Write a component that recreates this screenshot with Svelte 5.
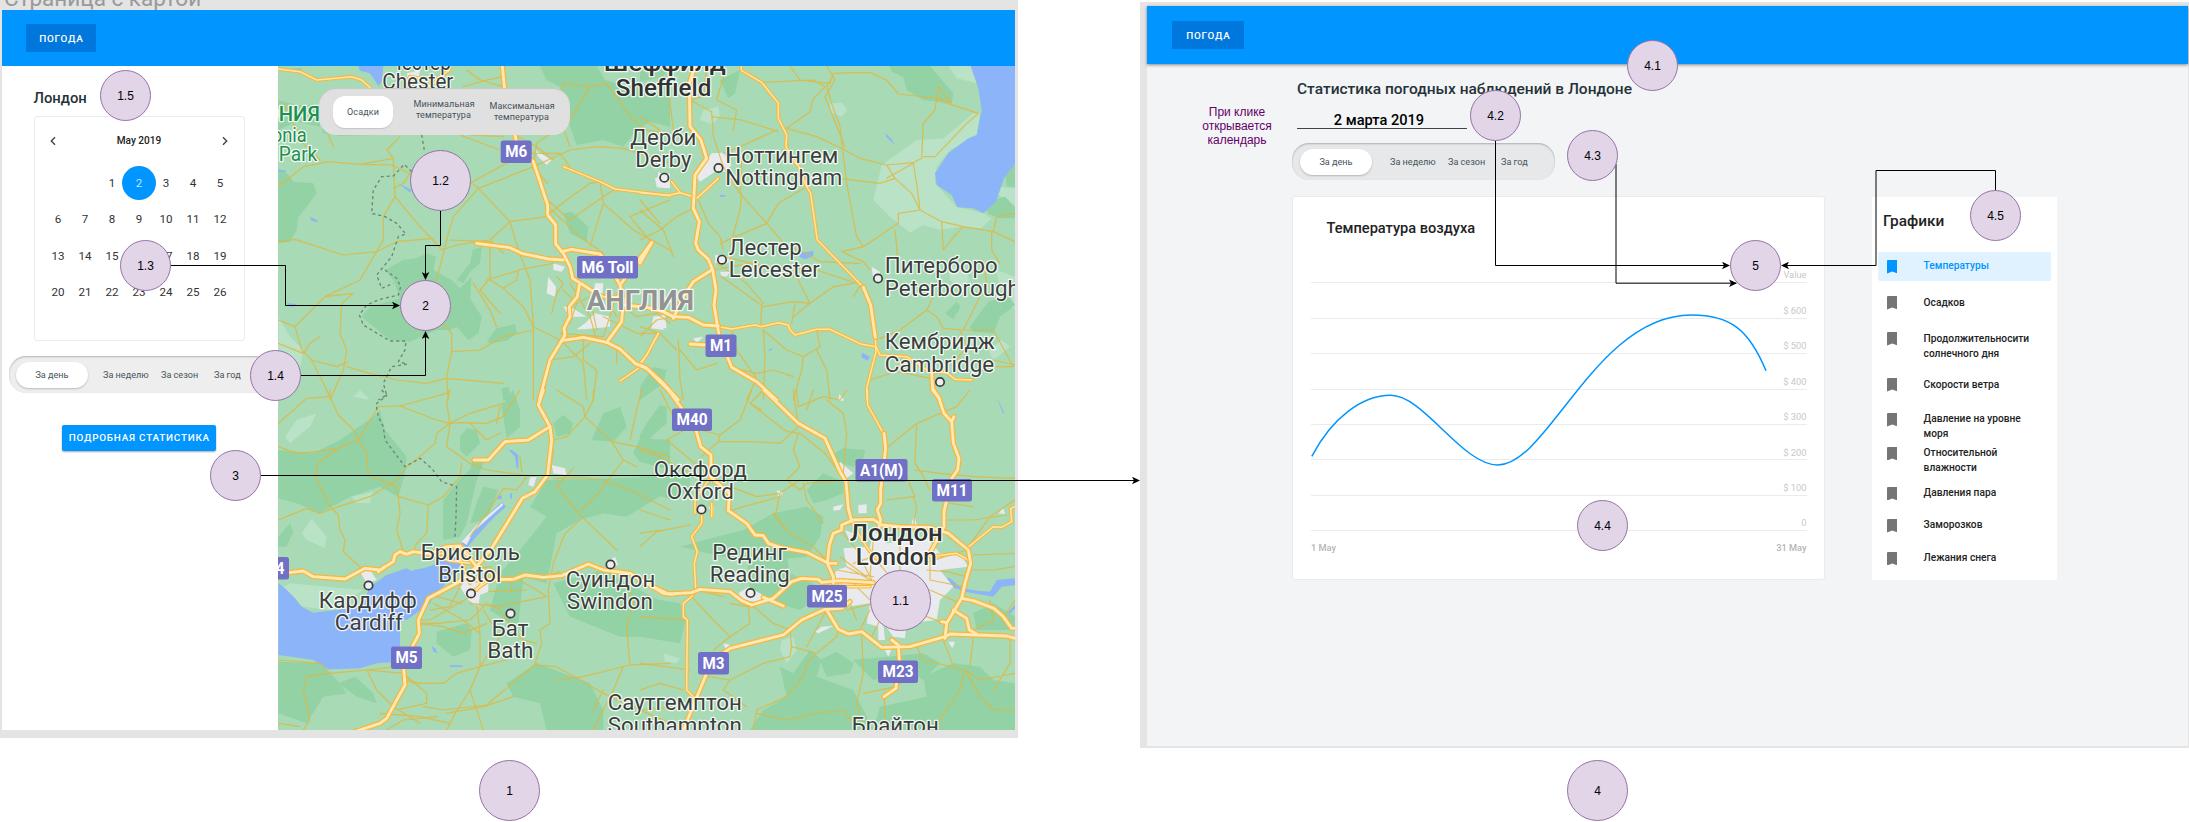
<script>
  const weeks = [
    ['', '', 1, 2, 3, 4, 5],
    [6, 7, 8, 9, 10, 11, 12],
    [13, 14, 15, 16, 17, 18, 19],
    [20, 21, 22, 23, 24, 25, 26]
  ];
  const periods = ['За день', 'За неделю', 'За сезон', 'За год'];
  const metrics = [
    { t: ['Температуры'], h: 36.2, on: true },
    { t: ['Осадков'], h: 36 },
    { t: ['Продолжительносити', 'солнечного дня'], h: 46 },
    { t: ['Скорости ветра'], h: 34.8 },
    { t: ['Давление на уровне', 'моря'], h: 33.8 },
    { t: ['Относительной', 'влажности'], h: 39.8 },
    { t: ['Давления пара'], h: 32.5 },
    { t: ['Заморозков'], h: 32.5 },
    { t: ['Лежания снега'], h: 28 }
  ];
  const axis = ['Value', '$ 600', '$ 500', '$ 400', '$ 300', '$ 200', '$ 100', '0'];

  // Map tiles: every tile holds its own drawing units, three to a pixel.
  const tiles = [
    {
      x: 270, y: 50,
      forest: [
        'M25,355 50,370 70,395 130,400 140,430 110,470 85,500 80,540 60,575 25,580Z',
        'M345,660 400,630 440,625 470,610 498,620 490,660 545,690 570,715 605,680 600,745 635,800 625,850 595,870 560,830 540,840 500,840 420,875 360,870 275,800 300,770 390,745 370,690Z',
        'M608,600 635,590 630,640 600,665 580,700 560,690 600,640Z',
        'M650,875 680,835 735,822 740,850 710,872 660,880Z',
        'M810,48 980,48 1005,90 1080,110 1200,140 1200,230 1140,215 1100,240 1060,290 1000,270 920,285 890,200 870,110 830,90Z',
        'M880,490 905,485 955,530 950,575 900,550Z',
        'M150,215 190,200 310,255 210,258 160,250Z',
        'M695,1015 715,1010 728,1050 700,1050Z',
        'M25,150 80,165 130,165 150,185 150,230 80,215 25,240Z'
      ],
      light: ['M25,800 60,860 100,900 85,990 60,940 25,900Z', 'M900,48 960,48 950,100 925,90Z'],
      water: ['M265,48 340,48 335,95 325,108 300,70 270,62Z', 'M120,500 140,510 144,517 125,512Z', 'M50,760 80,762 70,770 55,768Z', 'M25,361 47,361 47,366 25,366Z', 'M385,400 425,420 420,427 400,412Z', 'M25,58 100,55 75,66 25,62Z'],
      town: ['M410,70 450,60 445,90 415,90Z', 'M945,820 975,790 1020,800 1020,830 945,838 920,838Z', 'M835,680 858,710 855,740 830,730Z', 'M1150,800 1185,795 1190,835 1145,835Z', 'M975,700 1000,700 995,770 965,770Z', 'M850,640 885,650 875,665 850,660Z', 'M795,300 845,330 830,345 805,320Z', 'M1155,385 1200,370 1200,415 1160,410Z', 'M880,770 900,770 950,800 900,800Z'],
      minor: [
        'M25,410 100,350 175,335 270,343 365,345 420,370 M150,330 100,280 40,160 M270,343 370,325 350,300 390,260 M370,325 375,440 340,500 340,570 270,690 165,740 75,830 M175,255 190,290',
        'M25,575 75,568 220,615 320,605 380,575 490,565 M375,440 450,530 500,582 515,600 560,585 655,570 M420,370 400,400 372,415 M605,400 625,415 550,500 535,550 500,690 M540,570 660,575 660,690',
        'M625,415 720,515 745,600 780,690 790,820 790,1050 M720,515 830,500 M720,515 660,570 700,610 M600,400 690,350 750,320 M625,415 790,350 833,400 M510,810 545,850 545,905 530,980 535,1050 M545,905 630,900 700,860 790,840',
        'M75,830 95,900 125,930 180,1040 M125,930 200,950 235,935 M165,740 250,730 215,760 210,850 230,900 220,960 180,1050 M75,830 25,810 M25,880 100,910 120,880 150,860 M230,950 300,970 380,990 470,1000 530,985 700,1000',
        'M660,690 700,715 760,770 790,830 870,870 M700,715 740,690 745,660 850,640 M650,690 750,660 M790,350 900,300 980,290 1060,295 M790,350 800,280 900,210 960,110 1010,100 1080,200 1130,240 M900,290 860,180 880,100 960,110',
        'M785,310 870,310 900,350 M833,495 890,450 960,400 990,395 1000,460 1090,540 1200,600 M845,480 930,560 1000,610 M833,450 900,510 1000,440 1035,417 M1000,460 960,590 M1145,578 1080,500 1200,450',
        'M870,850 1000,860 1050,705 M900,700 960,800 980,870 M880,720 920,760 960,740 1010,750 1040,800 M860,680 880,700 860,730 845,790 M920,760 900,820 M960,740 980,840 M1000,730 1100,800 1160,790 1200,820 M1000,800 1100,850 1165,850',
        'M875,872 940,940 950,1050 M940,870 940,930 980,960 970,1050 M1040,900 1040,940 M840,930 910,920 960,880 M610,700 660,780 680,830 M655,690 630,720 690,790 M700,110 630,90 590,60 M580,110 650,90 700,80',
        'M570,255 690,300 M700,260 600,255 M735,255 800,290 850,330 M1090,110 1200,105 M1130,240 1200,250 M1060,295 1200,340'
      ],
      medium: ['M25,57 90,65 140,90 245,80 275,90 300,113', 'M880,350 990,395 1035,417 1200,437', 'M1165,850 1130,915 1110,940 1105,955 1050,993', 'M405,110 420,80 450,85 480,110 510,80 540,60', 'M940,705 1000,740 1060,740'],
      major: ['M697,48 703,110 735,255 745,300 790,335 833,465 833,495 857,525 857,582 880,610 900,650 908,685 940,705 970,725', 'M875,605 905,598 990,612 1020,650 1050,705', 'M620,580 720,593 755,610 835,627 880,630', 'M928,705 922,740 898,770 900,800 882,835 885,855 875,872 840,930 808,1050', 'M875,872 940,862 1010,877 1050,897 1095,940 1130,955 1200,1025', 'M1010,877 1055,815 1060,750 1050,705 1145,578', 'M1060,765 1130,772 1180,785 1210,800']
    },
    {
      x: 640, y: 50,
      forest: ['M0,48 90,48 70,80 0,95Z', 'M750,48 870,48 940,130 935,160 850,150 800,120 790,80 755,65Z', 'M1035,470 1060,450 1095,440 1125,470 1125,505 1080,505 1045,492Z', 'M1095,360 1125,345 1125,410 1100,410Z', 'M990,830 1045,755 1105,735 1125,765 1080,800 1060,850 1000,845Z', 'M915,790 950,755 962,770 940,808Z', 'M240,90 300,60 285,130 265,145Z', 'M0,180 20,200 10,225 0,225Z', 'M0,1010 40,950 80,960 70,1000 0,1050Z'],
      light: ['M725,345 830,270 910,265 1000,190 1020,190 1010,255 930,300 890,350 885,400 950,470 1030,490 1055,505 1025,535 960,530 900,540 850,525 810,548 750,500 700,450Z', 'M570,160 605,158 622,180 605,200 570,185Z', 'M190,180 235,170 240,200 215,222 180,210Z', 'M925,48 1000,48 1010,100 950,85Z', 'M925,640 975,660 990,690 960,715 930,690Z', 'M1045,900 1085,870 1110,890 1060,930Z', 'M1080,410 1125,415 1125,475 1070,430Z', 'M1070,660 1125,680 1125,780 1080,720Z'],
      water: ['M992,48 1125,48 1125,342 1092,385 1068,455 1030,490 1000,475 952,472 935,435 890,405 885,370 925,310 985,265 1010,255 1025,180 1015,115Z', 'M480,608 520,603 520,618 495,628 478,620Z', 'M665,908 690,920 682,932 665,922Z', 'M735,248 755,268 765,285 740,262Z', 'M240,435 256,435 256,440 240,440Z', 'M383,900 400,893 392,902Z', 'M930,965 935,965 925,990Z'],
      town: ['M55,365 90,385 85,415 50,412Z', 'M215,310 250,308 275,345 255,365 225,365 180,395 165,375 195,340Z', 'M225,615 270,620 265,640 225,640Z', 'M240,665 270,665 260,680 245,678Z', 'M40,800 75,800 70,840 35,835Z', 'M695,650 720,665 720,690 700,690Z', 'M160,865 190,860 170,880Z', 'M598,1032 612,1050 595,1050Z'],
      minor: [
        'M450,48 480,90 520,95 570,100 580,70 640,68 690,68 740,90 775,132 830,138 900,145 935,158 895,110 M580,75 560,110 575,160 600,230 620,400 650,560 670,590 M365,97 520,90 555,110 520,145 510,185 440,235 M560,48 585,90 555,140 615,290',
        'M440,235 530,260 615,300 660,325 740,345 820,338 845,325 850,220 885,180 895,110 M850,320 885,320 935,268 975,225 1015,190 970,175 890,150 M740,345 765,385 815,430 840,480 775,490 775,520 670,590 605,605 670,635 690,660 M740,385 820,340 830,400 840,480 905,515 970,530 1060,545 1125,575',
        'M905,515 910,600 950,550 970,530 M1060,545 1070,500 1125,490 M1055,545 1055,600 1080,640 M765,540 775,640 M720,400 765,385 M600,385 720,400 M150,150 215,185 220,260 250,350 300,430 380,520 440,590 480,600 540,635 660,640 M215,200 305,210 415,245 M410,240 300,290 250,310',
        'M175,450 205,520 240,560 250,600 M160,475 110,500 60,540 0,570 M300,430 305,330 M270,590 300,480 305,430 M240,580 380,520 415,460 500,410 M230,640 320,700 370,760 M220,660 330,640 470,680 500,740 510,760 460,800 M245,680 370,770 460,755 510,760 580,710 640,700 M250,620 380,650 530,660 650,700',
        'M362,830 365,770 M455,820 465,760 M665,700 640,740 M530,840 540,890 490,920 440,900 370,840 375,920 370,1050 M530,900 560,960 570,1050 M490,920 485,960 460,1050 M265,950 350,970 400,960 460,980 M0,450 60,520 M275,845 290,900 350,985 320,1050',
        'M720,865 780,840 860,780 890,800 910,835 970,840 1060,840 M860,780 880,740 M970,840 990,800 1040,700 1030,630 M1060,840 1120,950 1060,950 M800,920 750,970 690,990 M750,960 870,985 M940,940 980,890 960,840 M1000,985 1060,930 1125,945 M120,900 170,960 230,940 M115,870 120,990 130,1050 M0,200 60,240 M80,80 100,240',
        'M250,80 230,150 290,180 280,240 M200,50 190,140 150,150 M0,480 70,540 100,620 M0,830 60,850 110,900 M0,860 50,810 100,800'
      ],
      medium: ['M303,48 305,62 365,97 415,160 415,205 440,255 438,290 460,330 480,355 495,400 512,430 532,570 670,712', 'M0,428 85,436 120,428 160,440', 'M95,395 120,428', 'M170,445 235,385', 'M237,830 275,837 345,825 365,830 415,818 445,825 450,840 465,855 530,838 570,838 665,883 708,890 720,915 800,920 860,960', 'M706,862 708,905 680,1015 682,1050', 'M870,965 920,968 945,988 995,990', 'M55,850 20,915 0,945'],
      major: ['M165,48 148,100 150,230 182,268 200,325 165,375 160,475 178,515 167,580 175,600 205,628 218,660 228,720 222,765 237,855 262,920 275,952 350,995 410,1050', 'M0,640 35,578', 'M215,660 160,695 130,740 100,805', 'M60,780 100,800 145,802 190,825 235,828', 'M150,882 200,885', 'M670,712 692,765 706,862', 'M875,970 878,1015 900,1050', 'M0,945 20,955 70,1000 115,1050']
    },
    {
      x: 270, y: 390,
      forest: ['M25,180 130,190 210,150 310,80 330,60 345,120 410,200 405,250 385,320 330,290 240,320 150,370 80,340 25,325Z', 'M520,330 575,260 600,240 610,200 640,220 620,270 590,400 570,440 520,450Z', 'M570,140 590,115 620,120 630,160 590,200 570,180Z', 'M750,480 830,380 780,350 830,270 1200,260 1200,300 1070,380 1000,370 930,390 860,430 830,580 760,560 745,700 720,700 660,660 690,550Z', 'M850,580 1000,540 1200,650 1200,740 1050,740 950,700 900,680Z', 'M25,815 150,820 200,870 230,910 160,920 110,1000 25,970Z', 'M205,880 255,860 310,910 320,940 260,920Z', 'M710,880 800,820 960,880 1000,960 1000,1020 830,1020 810,940 730,920Z', 'M1090,190 1110,145 1200,150 1200,240 1110,215Z', 'M965,150 1000,70 1050,50 1070,110 1030,155Z', 'M850,100 880,75 910,100 900,130 860,140Z', 'M695,48 730,0 750,60 750,110 710,145Z', 'M500,725 590,700 605,720 600,780 550,800 500,760Z', 'M25,440 60,400 70,425 50,470 25,470Z', 'M640,290 685,300 650,390 600,400 620,340Z'],
      light: ['M45,140 80,90 140,70 120,110 60,160Z', 'M95,430 125,385 170,440 165,475 110,450Z', 'M245,320 310,305 300,340 260,340Z', 'M270,0 300,30 250,20Z', 'M25,600 60,580 280,600 180,660 100,650Z'],
      water: ['M25,580 45,595 75,625 95,650 130,668 280,650 400,570 430,540 490,530 500,510 560,500 575,520 520,590 470,630 440,660 390,700 390,815 320,820 270,835 175,838 130,810 65,800 25,795Z', 'M300,590 350,555 410,535 430,545 490,525 540,510 480,640 410,690 270,660Z', 'M575,460 600,425 650,380 695,335 708,350 680,375 655,400 615,445 590,475Z', 'M485,768 495,775 503,790 490,785Z', 'M540,826 577,826 577,831 540,831Z', 'M700,175 715,178 735,200 740,235 745,235 745,195 725,180Z', 'M683,318 695,316 695,328 683,328Z', 'M720,310 726,310 726,325 720,325Z'],
      town: ['M570,590 600,560 655,570 655,605 630,615 625,650 595,630Z', 'M270,545 300,540 320,570 290,580Z', 'M845,225 885,235 890,255 850,250Z', 'M780,262 800,262 790,290 775,285Z', 'M1010,515 1035,500 1045,525 1020,530Z', 'M575,455 620,405 690,345 695,338 700,345 610,425 590,465Z'],
      minor: [
        'M25,100 110,25 180,20 180,0 M180,20 205,75 255,125 265,150 290,190 295,255 380,290 385,320 475,345 520,320 570,260 575,220 M25,170 80,190 140,185 205,175 265,150 325,50 390,48 500,90 540,100 580,98 650,100 700,80 750,0',
        'M205,175 145,220 135,255 180,350 205,375 210,420 225,450 220,485 280,540 M25,390 110,355 150,370 205,350 300,320 380,270 410,230 450,200 495,160 500,130 540,100 530,170 600,220 650,240 780,258 M390,48 530,10 540,0 M540,100 530,40 540,0 M385,320 390,370 380,420 400,485 M475,345 470,430 440,460 430,485',
        'M540,100 600,70 700,40 M600,100 650,150 690,130 M680,100 690,50 M850,150 890,140 945,80 970,30 970,0 M945,80 1025,155 1100,170 1200,200 M1025,155 1060,210 1100,230 M945,80 940,50 860,0 M1080,150 1100,60 1115,0 M850,265 930,262 1000,270 1080,300 1200,360 M860,290 935,380 1040,480 M860,290 910,235 M935,360 985,310 1060,210',
        'M850,180 840,250 M770,260 740,300 700,295 650,370 600,440 M750,200 755,245 M930,390 885,430 850,520 835,600 840,700 810,720 815,760 795,820 M800,825 860,830 1000,910 1200,1000 M800,820 740,870 650,945 520,960 460,950 M730,560 800,600 830,620 680,650 600,640',
        'M620,640 630,730 630,830 560,850 520,880 450,880 400,870 M630,830 710,810 M650,640 690,660 730,720 760,750 800,760 M630,730 580,690 490,640 M600,620 480,690 450,690 M655,605 770,600 M650,640 600,690 500,700 440,700 M640,660 690,740 630,830 M445,700 520,710 580,730 650,700',
        'M25,810 150,820 180,850 290,840 380,830 M180,850 110,860 100,900 120,990 M290,840 320,900 370,950 450,1000 M290,840 400,850 470,910 470,940 380,960 M400,850 430,880 M330,970 450,980 540,1000 M630,830 600,900 550,980 530,1020 M600,900 640,1020 M730,920 640,950 530,970 M1000,900 970,960 M860,870 940,860 1080,825 1200,820 M1080,825 1070,710 1090,640 1070,560',
        'M25,1000 90,1010 M120,990 100,1020 M350,1020 400,990 500,980 M830,560 870,545 M575,580 540,650 480,660 M575,640 500,620 M970,1020 1030,900 1060,830 M535,550 660,530 700,568 M730,568 720,600'
      ],
      medium: ['M530,490 480,492 530,470 570,468 600,500', 'M480,492 540,512 600,520', 'M560,470 575,520 600,580', 'M660,570 600,610', 'M620,530 700,568', 'M650,560 620,600'],
      major: ['M820,0 805,45 840,110 845,150 833,255 795,305 757,325 665,475 620,530 560,580 475,625 445,690 448,730 400,820 405,885 350,985 330,1000 255,1025', 'M612,210 655,210 705,155 775,150 840,110', 'M55,548 100,543 130,560 225,567 285,535 330,540 370,515 375,495 390,485 410,493 430,485 480,492 530,470 570,468 620,530', 'M620,570 730,568 765,555 820,562 875,557 955,522 1000,540 1080,550 1180,610 1210,613', 'M325,545 345,530']
    },
    {
      x: 640, y: 390,
      forest: ['M0,135 20,100 60,45 80,50 80,100 45,130 0,180Z', 'M0,260 150,255 150,290 100,330 0,300Z', 'M585,190 610,175 675,180 670,205 640,230 590,215Z', 'M500,300 550,250 610,275 610,310 560,330 520,340Z', 'M120,470 230,440 310,420 400,370 500,350 550,380 540,440 500,500 400,510 250,500Z', 'M320,490 440,500 450,550 560,600 480,660 380,630 330,600Z', 'M0,620 120,640 140,680 120,760 0,740Z', 'M330,1020 370,960 440,920 420,830 460,850 510,780 545,810 530,860 640,900 700,1020Z', 'M850,860 940,820 1020,830 1060,870 1125,880 1125,1020 700,1020 720,950 860,920Z', 'M540,810 590,785 640,820 630,850 560,860Z', 'M1000,670 1060,640 1125,680 1125,720 1010,720Z', 'M640,810 850,790 900,820 850,870 800,840 700,870Z'],
      light: ['M425,750 460,740 470,780 440,820 420,780Z', 'M70,790 120,805 110,820 75,815Z'],
      water: ['M900,565 930,565 965,595 1010,602 1050,605 1070,570 1125,565 1125,585 1085,590 1060,620 975,605 935,590 900,580Z', 'M1105,665 1125,645 1125,655 1110,672Z', 'M1070,20 1093,70 1088,68Z'],
      town: ['M610,475 690,470 700,420 740,460 860,440 900,490 960,490 985,530 900,540 940,590 900,630 890,690 800,700 795,745 760,740 730,700 735,750 715,750 715,710 680,700 690,640 620,650 600,630 570,580 590,540 620,530Z', 'M655,345 680,343 680,370 655,370Z', 'M580,350 610,343 600,360 580,362Z', 'M600,215 640,250 620,265 590,240Z', 'M295,610 325,590 385,625 370,640 310,630Z', 'M525,725 545,710 580,708 535,730Z', 'M735,780 755,778 745,800Z', 'M815,395 825,380 830,405 815,405Z', 'M925,755 945,755 937,775Z', 'M205,350 222,350 220,380Z', 'M1075,370 1090,355 1095,372Z', 'M410,300 430,308 415,322Z', 'M598,15 612,32 600,32Z', 'M615,420 640,430 630,455Z', 'M250,760 270,765 260,785Z'],
      minor: [
        'M0,180 60,200 150,250 M100,80 60,0 M150,110 80,150 200,250 M180,120 240,135 235,155 185,200 M235,155 340,155 420,160 475,110 460,0 M240,135 300,90 335,0 M330,40 440,125 480,130 555,190 600,250 M475,130 460,180 480,230 440,270 480,300 500,280 620,270 M420,310 350,320 270,290 M420,310 480,270 M420,310 405,380 450,430 520,470 560,510',
        'M0,470 50,425 150,405 M265,365 310,350 420,320 M400,370 440,420 M365,60 330,40 370,0 M475,50 550,20 600,30 620,0 M560,30 610,70 620,130 610,250 M475,50 470,0 M745,170 830,100 950,50 990,0 M830,100 825,220 845,250 870,300 M740,330 820,320 830,350 820,410 M825,240 900,250 1000,260 1125,265 M740,240 800,260 825,320',
        'M920,390 1000,390 1100,375 M985,470 1050,380 1125,330 M1000,350 930,340 M1000,495 1125,490 M590,540 700,560 M600,500 680,560 M620,530 710,580 M640,580 700,640 M870,490 870,570 M850,520 980,480 M870,600 960,640 M870,570 970,590 M860,680 915,700 M700,640 620,660 M690,660 660,720 M720,690 690,750',
        'M640,520 700,500 720,520 M860,540 920,545 980,560 M780,470 780,540 M700,450 690,560 M270,640 325,650 330,700 270,740 220,780 M170,600 250,620 M155,620 220,690 270,740 M330,640 400,700 450,720 455,770 450,800 370,820 270,870 205,860 M0,820 150,840 M140,690 0,680 M270,870 250,900 320,950',
        'M455,770 530,790 590,740 595,718 M530,790 500,820 490,860 440,920 350,960 340,1020 M350,970 440,990 530,970 610,960 640,1000 M665,725 670,850 650,940 670,1020 M733,920 735,1020 M670,910 770,890 830,840 M830,770 850,810 975,840 1020,870 M975,840 960,900 885,1010 M975,840 1020,920 1060,960 1125,960 M910,750 940,830 M1000,740 990,830 M1125,850 1020,870 M1110,740 1110,820 1060,900',
        'M1050,630 1060,690 1000,720 M1085,690 1125,630 M980,540 1060,540 1125,530 M560,660 500,770 M0,360 90,390 M0,430 60,420 M630,640 650,690 M610,430 650,480 700,580 M520,0 500,60 M750,560 700,500 M490,280 500,330 550,400 M0,900 60,880 130,900 M0,960 110,950'
      ],
      medium: ['M682,0 683,45 730,130', 'M185,360 185,400 155,440 172,485 163,520 167,595 155,620 130,640 130,680 142,690 140,900 160,920', 'M210,265 185,300 165,330 165,370', 'M980,475 1060,410 1085,412 1115,395 1112,355 1125,350', 'M870,500 950,490 985,510', 'M635,395 660,440 700,500 720,510', 'M215,340 215,380', 'M600,600 600,572', 'M545,575 610,590 690,590'],
      major: ['M85,0 165,110 182,170 213,195 213,262 268,310 265,362 320,400 345,435 370,437 385,460 420,472 500,487 565,520', 'M372,0 475,100 555,145 600,245 618,275 625,355 635,395', 'M732,130 737,175 722,300 722,340 712,360 722,390 715,420', 'M878,0 895,20 912,70 935,95 940,160 957,205 953,240 935,265 912,365 912,410 870,490', 'M635,390 700,388 725,405 780,410 870,412 925,430 985,480 992,520 975,580 965,625 920,700 915,745', 'M915,740 810,770 725,772 665,725 625,732 595,718 560,660', 'M635,392 605,405 605,420 580,430 568,465 562,520 580,560 580,580', 'M565,520 588,520', 'M40,590 85,612 155,608 180,598 270,605 305,632 335,645 400,625 455,575 485,565 535,568 545,577 600,572 700,578', 'M370,622 430,648', 'M130,1020 200,850 220,810 270,775 430,735 485,690 555,658 605,655 630,635', 'M965,625 1000,632 1062,655 1090,680 1115,715 1125,715', 'M940,660 980,685 988,720 1010,732', 'M905,695 920,698', 'M915,740 930,732 1100,738 1125,745', 'M755,750 775,765 778,810 768,895 732,920', 'M935,95 942,80']
    }
  ];

  // Place names: [text, left, baseline, width, kind]
  const names = [
    ['Честер', 390, 70, 61, ''], ['Chester', 383.5, 89, 70, ''],
    ['Шеффилд', 605, 70.7, 121, 'b'], ['Sheffield', 617, 95.5, 94.5, 'b'],
    ['ОНИЯ', 266, 120.7, 54, 'g gb'], ['onia', 273, 141.7, 34, 'g'], ['Park', 280, 160.7, 37.5, 'g'],
    ['АНГЛИЯ', 588, 310, 106, 'c'],
    ['Дерби', 631.5, 145, 65, ''], ['Derby', 636.5, 166.7, 55, ''],
    ['Ноттингем', 726.5, 163, 112, ''], ['Nottingham', 726.5, 185, 116, ''],
    ['Лестер', 730, 254.5, 72, ''], ['Leicester', 730, 277, 90, ''],
    ['Питерборо', 886, 273, 112, ''], ['Peterborough', 886, 295.5, 134, ''],
    ['Кембридж', 886, 349, 109, ''], ['Cambridge', 886, 371.5, 108.5, ''],
    ['Оксфорд', 655, 477, 92, ''], ['Oxford', 668, 499, 66, ''],
    ['Лондон', 851, 541, 92, 'b'], ['London', 857, 565, 80, 'b'],
    ['Рединг', 713.5, 560, 73.5, ''], ['Reading', 711, 582, 79, ''],
    ['Саутгемптон', 609, 710, 133, ''], ['Southampton', 609, 733, 133, ''], ['Брайтон', 853, 733, 86, ''],
    ['Бристоль', 422, 560, 98, ''], ['Bristol', 439.5, 582, 62, ''],
    ['Кардифф', 320, 607.5, 97, ''], ['Cardiff', 336, 630, 67, ''],
    ['Суиндон', 567, 587, 88.5, ''], ['Swindon', 568, 608.5, 85, ''],
    ['Бат', 493, 636, 35.5, ''], ['Bath', 488.5, 658, 45, '']
  ];
  const dots = [[664.3, 177.7], [718.5, 168], [722, 259.7], [878, 278.5], [940, 382], [701.5, 509.5], [750.5, 593], [471, 593.5], [368.5, 585.5], [610.5, 564.5], [510.5, 613.5]];
  const shields = [['M6', 500.7, 140.5, 31], ['M6 Toll', 577, 256, 61], ['M1', 705.5, 334.5, 31], ['M40', 672, 408.5, 40], ['A1(M)', 855.5, 459, 52], ['M11', 932, 479, 40], ['M25', 807, 585, 40], ['M3', 698, 652, 31], ['M23', 878, 660.5, 40], ['M5', 391, 646.5, 31], ['M4', 258, 557, 31]];

  const marks = [
    ['1.5', 125.5, 95.5, 25], ['1.2', 440.5, 180.5, 30], ['2', 425.5, 305.5, 25], ['1.3', 145.5, 265.5, 25], ['1.4', 275.5, 375.5, 25],
    ['3', 235.5, 475.5, 25], ['1', 509.5, 790.5, 30], ['1.1', 900.5, 600.5, 30], ['4.1', 1652.5, 65.5, 25], ['4.2', 1495.5, 115.5, 25],
    ['4.3', 1592.5, 155.5, 25], ['4.4', 1602.5, 525.5, 25], ['5', 1755.5, 265.5, 25], ['4.5', 1995.5, 215.5, 25], ['4', 1597.5, 790.5, 30]
  ];
  const links = [
    'M440.5 210.5V245.5H425.5V279', 'M170.5 265.5H285.5V305.5H399', 'M300.5 375.5H425.5V332', 'M260.5 475.5H700.5V480.5H1139',
    'M1495.5 140.5V265.5H1729', 'M1616 164V283.2H1736', 'M1995.5 190.5V170.5H1876V265.5H1782'
  ];
</script>

{#snippet tabs()}
  <div class="tabs">
    {#each periods as p, i}<span class="p{i}">{p}</span>{/each}
  </div>
{/snippet}

<main>
  <section class="frame left">
    <div class="caption">Страница с картой</div>
    <header><button>ПОГОДА</button></header>
    <div class="body">
      <aside>
        <h2>Лондон</h2>
        <div class="calendar">
          <div class="month">
            <svg width="8" height="10" viewBox="0 0 8 10"><path d="M6 1.2 2.3 5 6 8.8" /></svg>
            <b>May 2019</b>
            <svg width="8" height="10" viewBox="0 0 8 10"><path d="M2 1.2 5.7 5 2 8.8" /></svg>
          </div>
          <div class="days">
            {#each weeks.flat() as d}<span class:sel={d === 2}>{d}</span>{/each}
          </div>
        </div>
        {@render tabs()}
        <button class="more">ПОДРОБНАЯ СТАТИСТИКА</button>
      </aside>
      <div class="mapbox">
        <svg class="map" width="737" height="664" viewBox="278 66 737 664">
          <rect x="278" y="66" width="737" height="664" fill="#a7dab5" />
          {#each ['light', 'forest', 'water', 'town', 'minor', 'medium', 'major'] as layer}
            {#each tiles as t}
              <g transform="translate({t.x} {t.y}) scale(.33333)" class={layer}>
                {#each t[layer] as d}<path {d} />{/each}
              </g>
            {/each}
            {#if layer === 'medium' || layer === 'major'}
              {#each tiles as t}
                <g transform="translate({t.x} {t.y}) scale(.33333)" class="{layer} core">
                  {#each t[layer] as d}<path {d} />{/each}
                </g>
              {/each}
            {/if}
          {/each}
          <g transform="translate(270 50) scale(.33333)" class="border">
            <path d="M455,255 463,300 M425,365 403,343 370,378 335,380 310,420 305,490 345,500 380,520 408,552 385,560 365,620 320,675 335,715 370,700 M345,660 380,685 392,710 385,735 330,748 290,765 268,795 280,825 360,873 408,873 405,900 385,935 412,942 365,950 340,1000 350,1035 325,1050" />
          </g>
          <g transform="translate(270 390) scale(.33333)" class="border">
            <path d="M335,0 350,17 318,42 325,80 340,110 345,150 405,230 450,205 485,235 515,275 560,290 558,380 555,440" />
          </g>
          {#each dots as [x, y]}<circle cx={x} cy={y} r="4.2" fill="#eee" stroke="#3c3c3c" stroke-width="1.7" />{/each}
          {#each names as [s, x, y, w, k]}
            <text class="name {k}" x={x - 1.2} {y} textLength={w + 1} lengthAdjust="spacingAndGlyphs">{s}</text>
          {/each}
          {#each shields as [s, x, y, w]}
            <rect {x} {y} width={w} height="22.4" rx="2.5" fill="#7070c6" />
            <text class="shield" x={x + w / 2} y={y + 16.7} textLength={w - 9} lengthAdjust="spacingAndGlyphs">{s}</text>
          {/each}
        </svg>
        <div class="layers">
          <span class="on">Осадки</span>
          <span class="min">Минимальная<br />температура</span>
          <span class="max">Максимальная<br />температура</span>
        </div>
      </div>
    </div>
  </section>

  <section class="frame right">
    <header><button>ПОГОДА</button></header>
    <div class="stats">
      <div class="main">
        <h2>Статистика погодных наблюдений в Лондоне</h2>
        <div class="date">2 марта 2019</div>
        {@render tabs()}
        <div class="card">
          <h3>Температура воздуха</h3>
          <div class="plot">
            {#each axis as a}<div class="tick">{a}</div>{/each}
            <svg width="497" height="270" viewBox="1310 266 497 270"><path d="M1311.8 456.3C1332 418 1362 395.3 1390.7 395.3C1424 395.3 1462 465 1497.9 465C1548 465 1596 315 1691.4 315C1731 315 1749 330 1766 370.7" /></svg>
          </div>
          <div class="range"><span>1 May</span><span>31 May</span></div>
        </div>
      </div>
      <nav>
        <h3>Графики</h3>
        {#each metrics as m}
          <div class="row" class:on={m.on} style="height:{m.h}px">
            <svg width="10.6" height="13.6" viewBox="0 0 11 13.6" preserveAspectRatio="none"><path d="M1 0H10Q11 0 11 1V13.6L5.5 11.4 0 13.6V1Q0 0 1 0Z" /></svg>
            <span>{#each m.t as line}<span class="line">{line}</span>{/each}</span>
          </div>
        {/each}
      </nav>
    </div>
  </section>

  <p class="note">При клике открывается календарь</p>

  <svg class="flow" width="2189" height="822" viewBox="0 0 2189 822">
    <defs>
      <marker id="tip" viewBox="0 0 8 8" refX="7" refY="4" markerWidth="8" markerHeight="8" markerUnits="userSpaceOnUse" orient="auto"><path d="M0 .2 8 4 0 7.8 2 4Z" /></marker>
    </defs>
    {#each links as d}<path class="link" {d} marker-end="url(#tip)" />{/each}
    {#each marks as [s, x, y, r]}
      <circle cx={x} cy={y} {r} />
      <text {x} y={y + 4.5}>{s}</text>
    {/each}
  </svg>
</main>

<style>
  :global(body) { background: #fff; }
  main { position: relative; width: 2189px; height: 822px; overflow: hidden; font-family: Roboto, sans-serif; color: #333; }
  h2, h3, p { margin: 0; font-weight: 500; }
  button { border: 0; padding: 0; font-family: inherit; font-weight: 500; color: #fff; font-size: 9.9px; letter-spacing: .75px; text-indent: .75px; }
  .frame { position: absolute; isolation: isolate; box-sizing: border-box; background: #e4e4e4; overflow: hidden; display: flex; flex-direction: column; }
  .left { left: 0; top: 0; width: 1018px; height: 738px; padding: 0 3px 8px 2px; }
  .right { left: 1140px; top: 2px; width: 1049px; height: 746px; padding: 4px 1px 2px 7px; }
  .caption { height: 10px; line-height: 26px; margin-top: -15.5px; padding: 0 2px 15.5px; font-size: 22.5px; color: #999; white-space: nowrap; }
  header { position: relative; z-index: 1; flex: none; box-sizing: border-box; background: #0095ff; }
  header button { background: #0077dd; height: 28px; width: 70px; display: block; }
  .left header { height: 56px; padding: 14px 24px; }
  .right header { height: 58px; padding: 15px 25px; box-shadow: 0 1px 3px rgba(0, 0, 0, .45); }
  .right header button { width: 72px; }
  .body { display: flex; height: 664px; background: #fff; }
  aside { width: 276px; display: flex; flex-direction: column; box-sizing: border-box; padding: 23px 0 0; }
  aside h2 { font-size: 14.8px; line-height: 18px; margin-left: 31.5px; color: #263238; }
  .calendar { box-sizing: border-box; width: 211px; height: 225px; margin: 8.5px 0 0 31.5px; border: 1px solid #ececec; border-radius: 3px; }
  .month { display: flex; align-items: center; justify-content: space-between; padding: 18.5px 14px 0; height: 12px; line-height: 12px; }
  .month svg { fill: none; stroke: #444; stroke-width: 1.4; }
  .month b { font-size: 10.1px; font-weight: 500; color: #222; }
  .days { display: grid; grid-template-columns: repeat(7, 27px); grid-auto-rows: 36.6px; padding: 17.5px 0 0 10px; text-align: center; font-size: 11.6px; line-height: 36.6px; color: #333; }
  .sel { position: relative; isolation: isolate; color: #bfe2ff; }
  .sel::before { content: ''; position: absolute; z-index: -1; left: -3.5px; top: 1.3px; width: 34px; height: 34px; border-radius: 50%; background: #0095ff; }
  .tabs { display: flex; align-items: center; box-sizing: border-box; width: 263px; height: 37px; padding: 1.5px 0 0 7px; border-radius: 17px; background: #eee; box-shadow: inset 0 1px 2px rgba(0, 0, 0, .25); font-size: 9.1px; color: #46535a; white-space: nowrap; }
  .tabs span { line-height: 26px; }
  .tabs .p0 { width: 72px; margin-right: 15px; border-radius: 13px; background: #fff; text-align: center; box-shadow: 0 1px 2px rgba(0, 0, 0, .22); }
  .p1 { width: 58px; }
  .p2 { width: 53px; }
  aside .tabs { margin: 15.5px 0 0 7px; }
  .more { width: 154px; height: 26.5px; margin: 31.5px 0 0 60px; border-radius: 2px; background: #0095ff; box-shadow: 0 1px 2px rgba(0, 0, 0, .35); white-space: nowrap; letter-spacing: .78px; }
  .mapbox { position: relative; width: 737px; height: 664px; overflow: hidden; }
  .map { display: block; font-family: Roboto, sans-serif; }
  .forest { fill: #93d2a4; }
  .light { fill: #b9e2c6; }
  .water { fill: #8cb4f8; }
  .town { fill: #e8eaed; }
  .minor, .medium, .major, .border { fill: none; stroke-linejoin: round; stroke-linecap: round; }
  .minor { stroke: #e3b73c; stroke-width: 3.6; opacity: .82; }
  .medium { stroke: #f7b941; stroke-width: 11; }
  .major { stroke: #f9b63c; stroke-width: 16; }
  .medium.core { stroke: #ffe6a3; stroke-width: 4.5; }
  .major.core { stroke: #ffe9b3; stroke-width: 8.5; }
  .border { stroke: #6c8579; stroke-width: 4; stroke-dasharray: 9 9; stroke-linecap: butt; }
  .name { font-size: 22px; fill: #3b3f3d; paint-order: stroke; stroke: rgba(255, 255, 255, .85); stroke-width: 2.6px; stroke-linejoin: round; }
  .name.b { font-size: 24px; font-weight: 500; fill: #303332; }
  .name.c { font-size: 27px; font-weight: 700; fill: #919493; }
  .name.g { font-size: 19.5px; fill: #21904f; }
  .name.gb { font-weight: 500; }
  .shield { font-size: 16px; font-weight: 700; fill: #fff; text-anchor: middle; }
  .layers { position: absolute; left: 41px; top: 22px; width: 251px; height: 47px; box-sizing: border-box; padding-left: 14px; display: flex; align-items: center; border-radius: 17px; background: #e0e0e0; box-shadow: inset 0 1px 1px rgba(0, 0, 0, .12); font-size: 9px; line-height: 10.8px; letter-spacing: .1px; color: #46535a; text-align: center; }
  .layers .on { width: 60px; line-height: 32px; border-radius: 12px; background: #fff; box-shadow: 0 1px 1px rgba(0, 0, 0, .12); }
  .layers .min { width: 60px; margin: -3px 0 0 20.5px; }
  .layers .max { width: 64px; margin-left: 16px; }
  .stats { flex: 1; display: flex; align-items: flex-start; background: #f2f4f6; padding-left: 145px; }
  .main { width: 532.5px; }
  .main h2 { padding: 15px 0 0 5px; font-size: 15.5px; line-height: 20px; color: #263238; white-space: nowrap; }
  .date { width: 170px; height: 20px; margin: 9.5px 0 0 5px; padding-right: 6px; box-sizing: border-box; border-bottom: 1.4px solid #444; text-align: center; font-size: 14.6px; line-height: 22px; font-weight: 500; color: #000; white-space: nowrap; }
  .main .tabs { margin-top: 14px; background: #e7e8ea; padding-left: 8px; }
  .main .tabs .p0 { margin-right: 18px; }
  .card { position: relative; box-sizing: border-box; width: 532.5px; height: 384px; margin-top: 16px; padding: 22px 17px 0 18px; background: #fff; border: 1px solid #e8eaec; border-radius: 3px; }
  .card h3 { margin: 0 0 6px 15.5px; font-size: 14.6px; line-height: 18px; color: #222; }
  .plot { position: relative; padding-top: 5.4px; }
  .plot svg { position: absolute; left: -1px; top: 23.7px; fill: none; stroke: #0095ff; stroke-width: 1.5; }
  .tick { height: 35.43px; box-sizing: border-box; border-bottom: 1px solid #ebebeb; padding-top: 21.5px; line-height: 12px; text-align: right; font-size: 9.3px; color: #c8c8c8; white-space: nowrap; }
  .range { display: flex; justify-content: space-between; margin-top: 10.5px; font-size: 9.2px; line-height: 12px; font-weight: 500; color: #b5b5b5; }
  nav { width: 185.5px; height: 383px; margin: 133px 0 0 47px; background: #fff; overflow: hidden; }
  nav h3 { margin: 14px 0 0 11.5px; font-size: 15.4px; line-height: 20px; color: #222; }
  nav h3 + .row { margin-top: 29px; }
  .row { position: relative; display: flex; gap: 26.5px; padding-left: 15px; font-size: 10.2px; font-weight: 500; line-height: 15px; color: #222; white-space: nowrap; }
  .row svg { flex: none; position: relative; fill: #757575; }
  .row > span { margin-top: -1.7px; position: relative; }
  .line { display: block; }
  .row.on { color: #0095ff; }
  .row.on svg { fill: #0095ff; }
  .row.on::before { content: ''; position: absolute; left: 6.5px; top: -8px; width: 173px; height: 28.5px; border-radius: 2px; background: #e0f1ff; }
  .note { position: absolute; left: 1192px; top: 105px; width: 90px; text-align: center; font: 12px/14px 'Liberation Sans', sans-serif; color: #606; }
  .flow { position: absolute; left: 0; top: 0; }
  .link { fill: none; stroke: #000; stroke-width: 1; }
  .flow circle { fill: #e1d5e7; stroke: #9673a6; }
  .flow text { font: 12px 'Liberation Sans', sans-serif; text-anchor: middle; fill: #000; }
</style>
